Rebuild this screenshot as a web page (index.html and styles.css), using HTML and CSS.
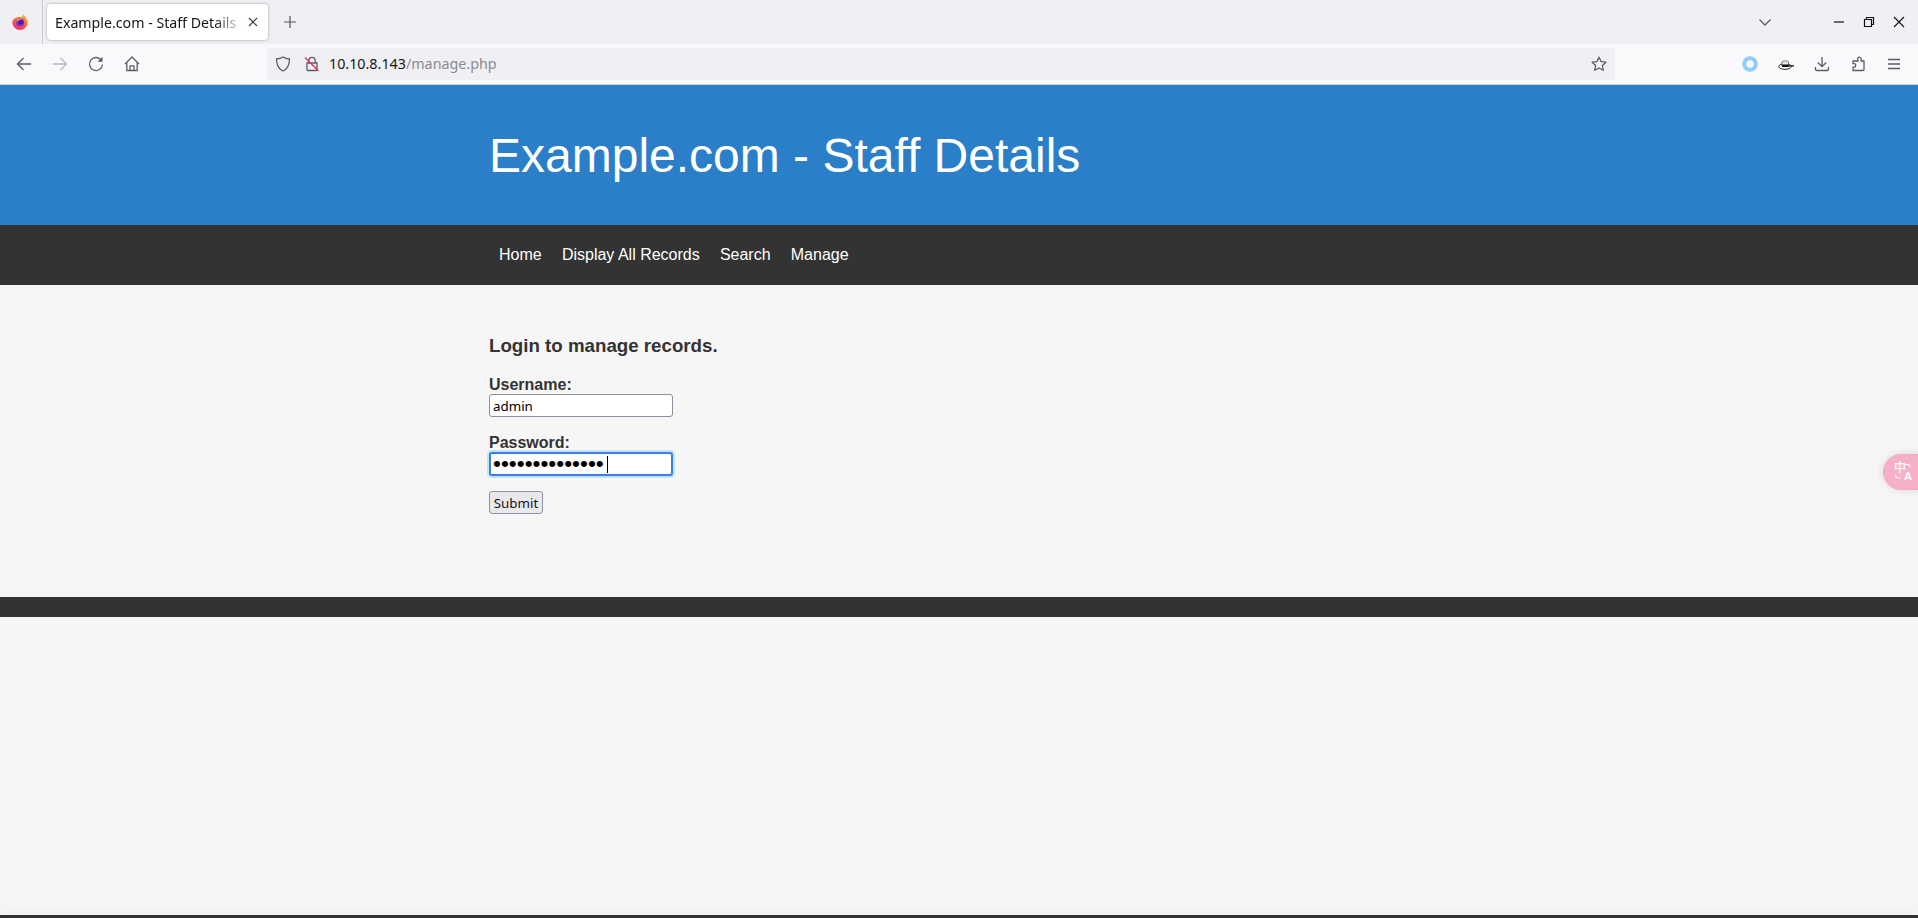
FILE: index.html
```html
<!DOCTYPE html>
<html lang="en">
<head>
<meta charset="utf-8">
<title>Example.com - Staff Details</title>
<link rel="stylesheet" href="styles.css">
</head>
<body>
<div class="browser">
  <div class="tabbar">
    <div class="ff-slot">
      <svg class="ff-logo" width="16" height="16" viewBox="0 0 16 16"><defs><linearGradient id="ffg" x1="0.8" y1="0" x2="0.3" y2="1"><stop offset="0" stop-color="#ffc23a"/><stop offset=".45" stop-color="#ff6a35"/><stop offset="1" stop-color="#ee2a7b"/></linearGradient></defs><path d="M.3 8.300A7.700 7.700 0 0 0 15.700 8.300c0-1.300-.3-2.500-.9-3.400l-.6.800C14 3.500 12.700 1.600 10.700 0c.3 1.500-.2 2.400-1.300 3.200C5.500 2.700 1 4 .3 8.300z" fill="url(#ffg)"/><circle cx="8.200" cy="8.300" r="4" fill="#7a2fd6"/><circle cx="8.800" cy="8.200" r="2.200" fill="#3b1ea8"/><path d="M4.200 7.500C5 4.800 8.500 3.800 11 5.300c-1.500-.3-3-.1-3.800.8-.8.900-1.800 1.300-3 1.400z" fill="#ffae2e"/></svg>
    </div>
    <div class="tab">
      <span class="tab-title">Example.com - Staff Details - </span>
      <svg class="tab-close" width="12" height="12" viewBox="0 0 12 12"><path d="M2 2l8 8M10 2l-8 8" stroke="#3a3a42" stroke-width="1.200" fill="none"/></svg>
    </div>
    <svg class="newtab" width="14" height="14" viewBox="0 0 14 14"><path d="M7 1v12M1 7h12" stroke="#54545c" stroke-width="1.200" fill="none"/></svg>
    <div class="tabbar-spacer"></div>
    <svg class="tablist" width="14" height="9" viewBox="0 0 14 9"><path d="M1.500 1.500L7 7l5.500-5.500" stroke="#5b5b66" stroke-width="1.300" fill="none"/></svg>
    <div class="winctl">
      <svg width="12" height="12" viewBox="0 0 12 12"><path d="M1 6h10" stroke="#111" stroke-width="1.200" fill="none"/></svg>
      <svg width="12" height="12" viewBox="0 0 12 12"><path d="M1.500 3.500h7v7h-7zM3.500 3.500v-2h7v7h-2" stroke="#111" stroke-width="1.200" fill="none"/></svg>
      <svg width="12" height="12" viewBox="0 0 12 12"><path d="M1 1l10 10M11 1L1 11" stroke="#111" stroke-width="1.100" fill="none"/></svg>
    </div>
  </div>
  <div class="toolbar">
    <div class="nav-icons">
      <svg width="16" height="16" viewBox="0 0 16 16"><path d="M15 8H1.500M7.500 2L1.500 8l6 6" stroke="#5b5b66" stroke-width="1.300" fill="none"/></svg>
      <svg width="16" height="16" viewBox="0 0 16 16"><path d="M1 8h13.500M8.500 2l6 6-6 6" stroke="#b8b8be" stroke-width="1.300" fill="none"/></svg>
      <svg width="16" height="16" viewBox="0 0 16 16"><path d="M13.500 4.500A6.500 6.500 0 1 0 14.500 8.500" stroke="#5b5b66" stroke-width="1.300" fill="none"/><path d="M14.500 .8v5h-5z" fill="#5b5b66"/></svg>
      <svg width="16" height="16" viewBox="0 0 16 16"><path d="M1 8l7-7 7 7M2.800 6.500V14.500h10.400V6.500M6 14.500V9.800h4v4.700" stroke="#5b5b66" stroke-width="1.300" fill="none" stroke-linejoin="round"/></svg>
    </div>
    <div class="urlbar">
      <svg width="16" height="16" viewBox="0 0 16 16"><path d="M8 1c2 1.200 4 1.800 6.500 2 0 5-1 9.500-6.500 12C2.500 12.500 1.500 8 1.500 3 4 2.800 6 2.200 8 1z" stroke="#5b5b66" stroke-width="1.300" fill="none"/></svg>
      <svg class="lock" width="16" height="16" viewBox="0 0 16 16"><path d="M4.800 7V4.500a3.200 3.200 0 0 1 6.400 0V7M3 7h10v6.500a1 1 0 0 1-1 1H4a1 1 0 0 1-1-1z" stroke="#5b5b66" stroke-width="1.300" fill="none"/><path d="M1 1.500l13.500 13.500" stroke="#e22850" stroke-width="1.300"/></svg>
      <span class="url"><span class="url-host">10.10.8.143</span><span class="url-path">/manage.php</span></span>
      <svg class="star" width="16" height="16" viewBox="0 0 16 16"><path d="M8 1.200l2.100 4.400 4.800.6-3.500 3.300.9 4.800L8 12l-4.300 2.300.9-4.800L1.100 6.200l4.800-.6z" stroke="#5b5b66" stroke-width="1.300" fill="none" stroke-linejoin="round"/></svg>
    </div>
    <div class="ext-icons">
      <svg width="16" height="16" viewBox="0 0 16 16"><circle cx="8" cy="8" r="5.800" stroke="#90cdf4" stroke-width="4" fill="none"/></svg>
      <svg width="16" height="16" viewBox="0 0 16 16"><ellipse cx="7" cy="10.500" rx="6.300" ry="2.800" stroke="#222" stroke-width="1" fill="#fff"/><path d="M4 10V6c0-1.500 6.500-1.500 6.500 0v4z" fill="#e8e8e8" stroke="#333" stroke-width=".6"/><path d="M4 8.500h6.500V11H4z" fill="#111"/><path d="M10 9.200h6v1.300h-6z" fill="#111"/></svg>
      <svg width="16" height="16" viewBox="0 0 16 16"><path d="M8 1v9.500M3.800 6.500L8 10.700l4.200-4.200M1.500 11v2.200c0 .8.500 1.300 1.300 1.300h10.400c.8 0 1.300-.5 1.300-1.300V11" stroke="#5b5b66" stroke-width="1.300" fill="none"/></svg>
      <svg width="16" height="16" viewBox="0 0 16 16"><path d="M3 14.500h10a1 1 0 0 0 1-1V5h-3c.9-1.700 0-3.800-1.800-3.800S7.300 3.300 8.200 5H3v2.700h1.200c2 0 2 3.500 0 3.500H3z" stroke="#5b5b66" stroke-width="1.300" fill="none" stroke-linejoin="round"/></svg>
      <svg width="16" height="16" viewBox="0 0 16 16"><path d="M2 3.500h12M2 8h12M2 12.500h12" stroke="#5b5b66" stroke-width="1.300" fill="none"/></svg>
    </div>
  </div>
</div>
<div class="page">
  <header class="site-header"><div class="wrap"><h1>Example.com - Staff Details</h1></div></header>
  <nav class="site-nav"><div class="wrap nav-row">
    <a href="#">Home</a><a href="#">Display All Records</a><a href="#">Search</a><a href="#">Manage</a>
  </div></nav>
  <main class="content"><div class="wrap">
    <h2>Login to manage records.</h2>
    <form class="login">
      <div class="field"><label for="u">Username:</label><input id="u" type="text" class="inp" value="admin"></div>
      <div class="field"><label for="p">Password:</label>
        <div class="pw-box"><input id="p" type="password" class="inp focused" value="passwordpasswo"><span class="caret"></span></div></div>
      <button type="button" class="submit">Submit</button>
    </form>
  </div></main>
  <footer class="site-footer"></footer>
  <div class="filler"></div>
  <div class="bottom-line"></div>
</div>
<div class="translate">
  <span class="translate-glyph">中</span><span class="translate-a">A</span>
  <svg class="translate-arcs" width="22" height="20" viewBox="0 0 22 20"><path d="M11 2.500h2.500c1.500 0 2.500 1 2.500 2.500M1.500 12.500c0 2 1 3.500 3 3.500h2" stroke="#fff" stroke-width="1.200" fill="none"/></svg>
</div>
</body>
</html>
```
FILE: styles.css
```css
* { box-sizing: border-box; }
html, body { margin: 0; padding: 0; height: 918px; overflow: hidden; }
body { font-family: "Liberation Sans", Arial, sans-serif; background: #f6f6f6; color: #333; display: flex; flex-direction: column; }

.browser { flex: none; font-family: "Noto Sans", "Open Sans", sans-serif; }
.tabbar { height: 44px; background: #f0f0f4; display: flex; align-items: center; }
.ff-slot { width: 43px; height: 44px; border-right: 1px solid #c8c8cc; display: flex; align-items: center; padding-left: 12px; }
.tab { width: 221px; height: 36px; margin-left: 4px; background: #fff; border-radius: 4px; box-shadow: 0 0 3px rgba(0,0,0,.35); display: flex; align-items: center; padding: 0 9px 0 8px; }
.tab-title { flex: 1; font-size: 14.200px; color: #15141a; white-space: nowrap; overflow: hidden; -webkit-mask-image: linear-gradient(to right, #000 85%, transparent 100%); mask-image: linear-gradient(to right, #000 85%, transparent 100%); }
.tab-close { margin-left: 4px; flex: none; }
.newtab { margin-left: 15px; }
.tabbar-spacer { flex: 1; }
.tablist { margin-right: 61px; }
.winctl { display: flex; gap: 18px; margin-right: 13px; }

.toolbar { height: 41px; background: #f9f9fb; border-bottom: 1px solid #cfcfd8; display: flex; align-items: center; }
.nav-icons { display: flex; gap: 20px; width: 267px; padding-left: 16px; }
.urlbar { width: 1348px; height: 32px; margin-top: -1px; background: #f0f0f4; border-radius: 4px; display: flex; align-items: center; padding: 0 8px; }
.lock { margin-left: 13px; }
.url { flex: 1; margin-left: 9px; font-size: 14.300px; white-space: nowrap; }
.url-host { color: #15141a; }
.url-path { color: #8a8a92; }
.ext-icons { display: flex; align-items: center; gap: 20px; margin-left: 127px; }

.page { flex: 1; display: flex; flex-direction: column; min-height: 0; }
.wrap { width: 940px; margin: 0 auto; }
.site-header { height: 140px; background: #2b7ec8; color: #fff; display: flex; align-items: center; flex: none; }
.site-header h1 { margin: 0; font-size: 48px; font-weight: 400; line-height: 1.200; padding-top: 1px; }
.site-nav { height: 60px; background: #333; flex: none; display: flex; align-items: center; }
.nav-row { display: flex; gap: 20.200px; padding-left: 10px; }
.nav-row a { color: #fff; text-decoration: none; font-size: 16px; }
.content { height: 312px; flex: none; padding-top: 50px; }
.content h2 { margin: 0 0 18px; font-size: 18.720px; font-weight: 700; line-height: 22px; color: #333; }
.field { margin-bottom: 16px; }
.field + .field { margin-bottom: 15px; }
.field label { display: block; font-weight: 700; font-size: 16px; line-height: 19px; color: #333; }
.inp { display: block; width: 184px; height: 23px; border: 1px solid #8f8f9d; border-radius: 3px; background: #fff; padding: 1px 3px; font-family: "Noto Sans", "Open Sans", sans-serif; font-size: 13.333px; color: #000; margin: 0; outline: none; }
.pw-box { position: relative; width: 184px; }
.focused { height: 24px; border: 2px solid #3584e4; padding: 0 2px; box-shadow: 0 0 0 2px #c4e0fb; color: #000; font-family: "Liberation Sans", sans-serif; font-size: 22.600px; }
.caret { position: absolute; left: 118px; top: 4px; width: 1px; height: 17px; background: #000; }
.submit { display: block; height: 23px; width: 54px; padding: 0; border: 1px solid #8f8f9d; border-radius: 3px; background: #e9e9ed; color: #15141a; font-family: "Noto Sans", "Open Sans", sans-serif; font-size: 13.333px; }
.site-footer { height: 20px; background: #333; flex: none; }
.filler { flex: 1; }
.bottom-line { height: 3px; background: #333; flex: none; box-shadow: 0 0 14px rgba(0,0,0,.12); }

.translate { position: absolute; left: 1883px; top: 454px; width: 40px; height: 36px; border-radius: 18px 0 0 18px; background: #f6afc9; box-shadow: 0 0 8px rgba(0,0,0,.12); color: #fff; font-family: "Noto Sans CJK SC", sans-serif; }
.translate-glyph { position: absolute; left: 11px; top: 6px; font-size: 12px; line-height: 14px; font-weight: 500; }
.translate-a { position: absolute; left: 21px; top: 16px; font-size: 11px; line-height: 12px; font-weight: 700; font-family: "Liberation Sans", sans-serif; }
.translate-arcs { position: absolute; left: 11px; top: 8px; }
```
